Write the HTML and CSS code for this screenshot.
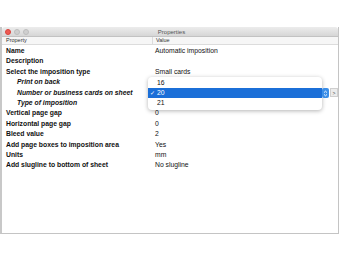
FILE: index.html
```html
<!DOCTYPE html>
<html lang="en">
<head>
    <meta charset="UTF-8">
    <title>Properties</title>
    <link rel="stylesheet" href="styles.css">
</head>
<body>
    <div class="window">
        <div class="titlebar">
            <div class="lights">
                <span class="light red"></span>
                <span class="light"></span>
                <span class="light"></span>
            </div>
            <div class="title">Properties</div>
        </div>
        <div class="header">
            <div class="col-prop">Property</div>
            <div class="col-val">Value</div>
        </div>
        <div class="rows">
            <div class="row"><div class="col-prop">Name</div><div class="col-val">Automatic imposition</div></div>
            <div class="row"><div class="col-prop">Description</div><div class="col-val"></div></div>
            <div class="row"><div class="col-prop">Select the imposition type</div><div class="col-val">Small cards</div></div>
            <div class="row sub"><div class="col-prop">Print on back</div><div class="col-val"></div></div>
            <div class="row sub"><div class="col-prop">Number or business cards on sheet</div><div class="col-val"></div></div>
            <div class="row sub"><div class="col-prop">Type of imposition</div><div class="col-val"></div></div>
            <div class="row"><div class="col-prop">Vertical page gap</div><div class="col-val">0</div></div>
            <div class="row"><div class="col-prop">Horizontal page gap</div><div class="col-val">0</div></div>
            <div class="row"><div class="col-prop">Bleed value</div><div class="col-val">2</div></div>
            <div class="row"><div class="col-prop">Add page boxes to imposition area</div><div class="col-val">Yes</div></div>
            <div class="row"><div class="col-prop">Units</div><div class="col-val">mm</div></div>
            <div class="row"><div class="col-prop">Add slugline to bottom of sheet</div><div class="col-val">No slugline</div></div>
        </div>

        <!-- open popup for the cards-on-sheet value -->
        <div class="menu">
            <div class="item">16</div>
            <div class="item selected"><span class="check">&#10003;</span>20</div>
            <div class="item">21</div>
        </div>
        <div class="stepper">
            <svg width="5" height="7" viewBox="0 0 5 7">
                <path d="M1 2.6 L2.5 1.2 L4 2.6 M1 4.4 L2.5 5.8 L4 4.4" fill="none" stroke="#fff" stroke-width="0.9"/>
            </svg>
        </div>
        <div class="more">&gt;</div>
    </div>
</body>
</html>
```

FILE: styles.css
```css
body {
    margin: 0;
    background-color: #fff;
    font-family: "Liberation Sans", Arial, sans-serif;
    color: #111;
}
.window {
    position: relative;
    margin: 27px 0 0 0;
    width: 336px;
    height: 206px;
    border: 1px solid #c4c4c4;
    border-top: none;
    border-left: 2px solid #c8c8c8;
    background-color: #fff;
}
.titlebar {
    display: flex;
    align-items: center;
    height: 9px;
    background: linear-gradient(#ececec, #d6d6d6);
    border-bottom: 1px solid #c2c2c2;
    border-radius: 3px 3px 0 0;
}
.lights {
    display: flex;
    gap: 3px;
    padding-left: 3px;
    width: 40px;
}
.light {
    width: 6px;
    height: 6px;
    border-radius: 50%;
    background-color: #cfcfcf;
    border: 0.5px solid #bdbdbd;
    box-sizing: border-box;
}
.light.red {
    background-color: #ee5a52;
    border-color: #d8443d;
}
.title {
    flex: 1;
    text-align: center;
    font-size: 6px;
    color: #555;
    padding-right: 40px;
}
.header {
    display: flex;
    height: 7px;
    line-height: 7px;
    font-size: 5.5px;
    color: #333;
    background-color: #f6f6f6;
    border-bottom: 1px solid #dcdcdc;
}
.header .col-prop {
    border-right: 1px solid #dcdcdc;
}
.col-prop {
    width: 146px;
    padding-left: 4px;
    white-space: nowrap;
}
.col-val {
    padding-left: 3px;
    white-space: nowrap;
}
.rows {
    padding-top: 1px;
}
.row {
    display: flex;
    height: 10.4px;
    line-height: 10.4px;
    font-size: 6.8px;
}
.row .col-prop {
    font-weight: bold;
}
.row .col-val {
    font-size: 6.8px;
}
.row.sub .col-prop {
    font-style: italic;
    padding-left: 15px;
    width: 135px;
}
.menu {
    position: absolute;
    left: 146px;
    top: 50px;
    width: 174px;
    padding: 1px 0 2px;
    background-color: #fff;
    border-radius: 4px;
    box-shadow: 0 1px 4px rgba(0, 0, 0, 0.3);
    font-size: 6.8px;
}
.item {
    position: relative;
    height: 10px;
    line-height: 10px;
    padding-left: 9px;
}
.item.selected {
    background-color: #1b6fd8;
    color: #fff;
}
.check {
    position: absolute;
    left: 2px;
    font-size: 6px;
}
.stepper {
    position: absolute;
    left: 320px;
    top: 61px;
    width: 7px;
    height: 10px;
    border-radius: 2px;
    background-color: #3b8ee8;
    display: flex;
    align-items: center;
    justify-content: center;
}
.more {
    position: absolute;
    left: 328px;
    top: 61px;
    width: 8px;
    height: 9px;
    line-height: 9px;
    text-align: center;
    font-size: 5px;
    color: #444;
    background-color: #ececec;
    border: 1px solid #cfcfcf;
    box-sizing: border-box;
}
```
